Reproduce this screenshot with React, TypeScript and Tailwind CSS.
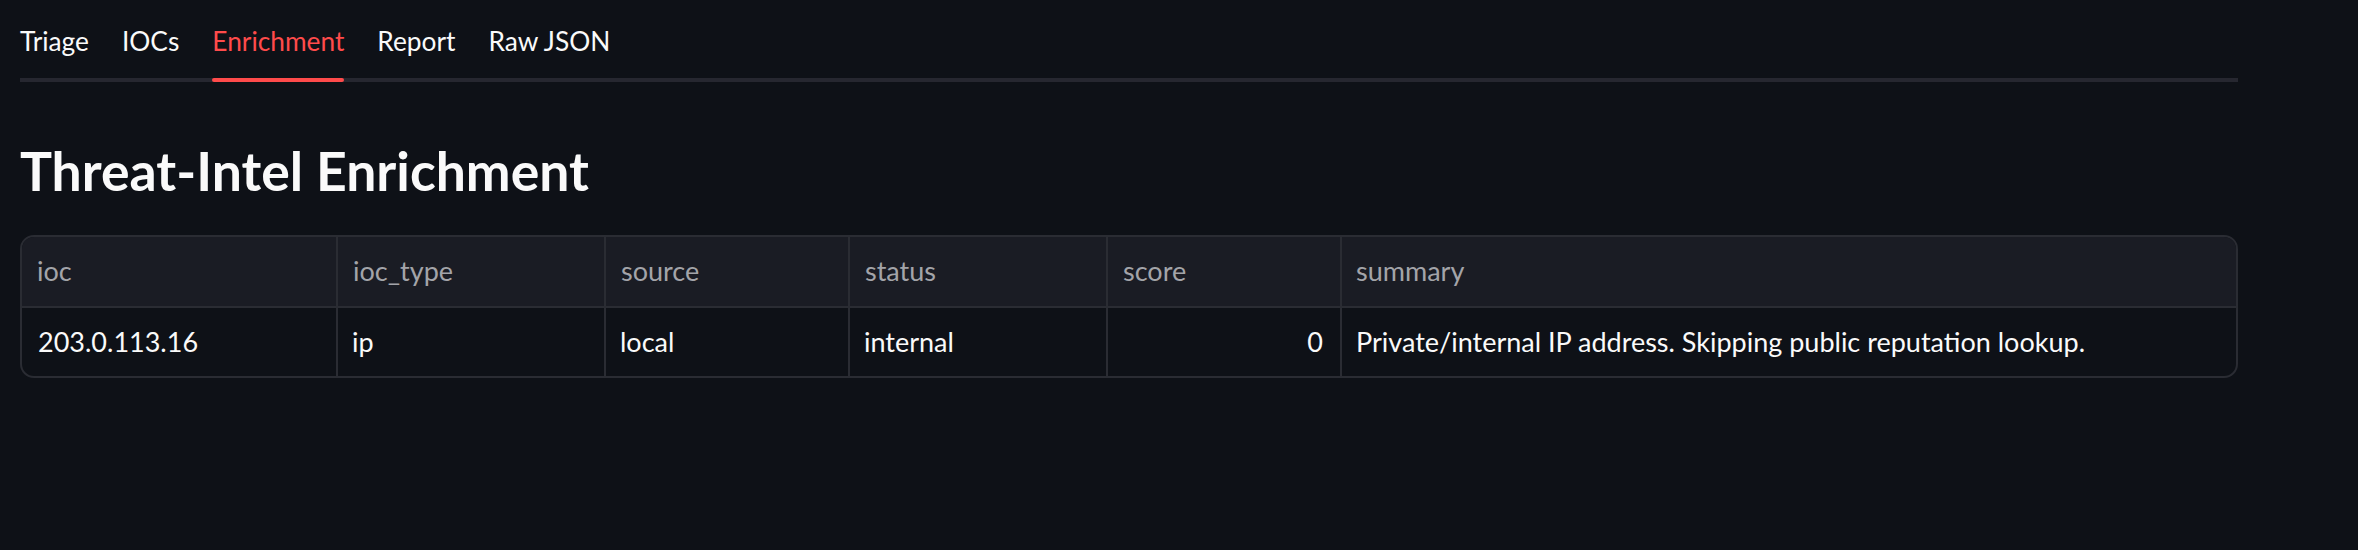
export default function App() {
  const tabs = ["Triage", "IOCs", "Enrichment", "Report", "Raw JSON"];
  const cols = ["ioc", "ioc_type", "source", "status", "score", "summary"];
  return (
    <div className="min-h-[550px] w-full bg-[#0e1117] font-['Lato',sans-serif] text-[#fafafa]">
      <div className="ml-[20px] w-[2218px]">
        <div className="flex gap-[33px] border-b-4 border-[#262730]">
          {tabs.map((t) => (
            <div
              key={t}
              className={
                t === "Enrichment"
                  ? "relative flex h-[78px] items-center pt-[5px] text-[26.3px] leading-[1.2] text-[#ff4b4b]"
                  : "relative flex h-[78px] items-center pt-[5px] text-[26.3px] leading-[1.2] text-[#fafafa]"
              }
            >
              {t}
              {t === "Enrichment" && (
                <span className="absolute -bottom-[4px] left-0 right-0 h-[4px] rounded-full bg-[#ff4b4b]" />
              )}
            </div>
          ))}
        </div>

        <h2 className="mt-[56px] text-[53.5px] font-bold leading-[1.2] text-[#fafafa]">
          Threat-Intel Enrichment
        </h2>

        <div className="mt-[33px] overflow-hidden rounded-[14px] border-2 border-[#2a2c33]">
          <div className="grid h-[71px] grid-cols-[316px_268px_244px_258px_234px_1fr] border-b-2 border-[#2a2c33] bg-[#1a1c24]">
            {cols.map((c, i) => (
              <div
                key={c}
                className={
                  i < cols.length - 1
                    ? "flex items-center border-r-2 border-[#2a2c33] pl-[15px] text-[27px] text-[#a3a4a9]"
                    : "flex items-center pl-[14px] text-[27px] text-[#a3a4a9]"
                }
              >
                {c}
              </div>
            ))}
          </div>
          <div className="grid h-[68px] grid-cols-[316px_268px_244px_258px_234px_1fr] text-[27px] text-[#fafafa]">
            <div className="flex items-center border-r-2 border-[#2a2c33] pl-[16px]">203.0.113.16</div>
            <div className="flex items-center border-r-2 border-[#2a2c33] pl-[14px]">ip</div>
            <div className="flex items-center border-r-2 border-[#2a2c33] pl-[14px]">local</div>
            <div className="flex items-center border-r-2 border-[#2a2c33] pl-[14px]">internal</div>
            <div className="flex items-center justify-end border-r-2 border-[#2a2c33] pr-[17px]">0</div>
            <div className="flex items-center pl-[14px]">
              Private/internal IP address. Skipping public reputation lookup.
            </div>
          </div>
        </div>
      </div>
    </div>
  );
}
